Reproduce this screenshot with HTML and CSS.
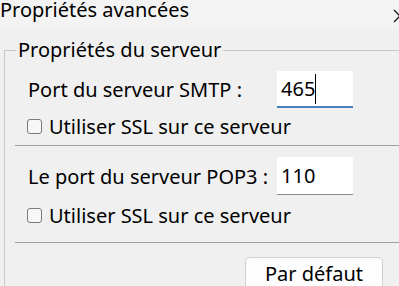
FILE: index.html
```html
<!DOCTYPE html>
<html lang="fr">
<head>
<meta charset="utf-8">
<title>Propriétés avancées</title>
<link rel="stylesheet" href="styles.css">
</head>
<body>
<div class="window">
  <div class="titlebar">
    <span class="title">Propriétés avancées</span>
    <svg class="close" width="12" height="14" viewBox="0 0 12 14"><path d="M1 1 L7 7 L1 13" fill="none" stroke="#1a1a1a" stroke-width="1.3"/></svg>
  </div>
  <div class="content">
    <div class="group">
      <div class="group-title">Propriétés du serveur</div>
      <div class="row row-smtp">
        <span class="label">Port du serveur SMTP :</span>
        <div class="input focused"><span>465</span><span class="caret"></span></div>
      </div>
      <label class="check check-1"><span class="box"></span><span>Utiliser SSL sur ce serveur</span></label>
      <div class="sep sep-1"></div>
      <div class="row row-pop">
        <span class="label">Le port du serveur POP3 :</span>
        <div class="input"><span>110</span></div>
      </div>
      <label class="check check-2"><span class="box"></span><span>Utiliser SSL sur ce serveur</span></label>
      <div class="sep sep-2"></div>
      <div class="actions">
        <button class="btn">Par défaut</button>
      </div>
    </div>
  </div>
</div>
</body>
</html>
```
FILE: styles.css
```css
html, body {
  margin: 0;
  padding: 0;
  background: #f0f0f0;
  overflow: hidden;
}
body {
  font-family: "Noto Sans", "Open Sans", sans-serif;
  font-size: 20px;
  color: #000;
  width: 399px;
  height: 286px;
}
.window {
  height: 286px;
  overflow: hidden;
}
.titlebar {
  height: 30px;
  background: #f3f3f3;
  display: flex;
  align-items: flex-start;
  justify-content: space-between;
}
.title {
  font-size: 20px;
  line-height: 20px;
  padding-top: 0;
}
.close {
  margin-right: -6px;
  margin-top: 9px;
}
.content {
  padding-left: 4px;
}
.group {
  margin-top: 20px;
  border-top: 1px solid #c8c8c8;
  border-left: 1px solid #c8c8c8;
  height: 236px;
}
.group-title {
  width: fit-content;
  margin-top: -13px;
  margin-left: 11px;
  padding: 0 2px;
  line-height: 24px;
  background: #f0f0f0;
}
.row {
  display: flex;
  align-items: center;
  height: 37px;
  padding-left: 23px;
}
.row-smtp { margin-top: 9px; }
.row-pop { margin-top: 11px; height: 38px; }
.label {
  width: 249px;
  flex: none;
  white-space: nowrap;
}
.input {
  width: 76px;
  height: 100%;
  box-sizing: border-box;
  background: #fff;
  border-bottom: 1px solid #8a8a8a;
  display: flex;
  align-items: center;
  padding-left: 4px;
}
.input.focused {
  border-bottom: 2px solid #4a7fc0;
}
.caret {
  display: inline-block;
  width: 1px;
  height: 30px;
  background: #000;
}
.check {
  display: flex;
  align-items: center;
  height: 26px;
  padding-left: 22px;
  gap: 7px;
  white-space: nowrap;
}
.check-1 { margin-top: 5px; }
.check-2 { margin-top: 7px; }
.box {
  width: 15px;
  height: 15px;
  flex: none;
  box-sizing: border-box;
  border: 1px solid #7a7a7a;
  border-radius: 3px;
  background: #f7f7f7;
}
.sep {
  height: 1px;
  background: #a0a0a0;
  margin-left: 10px;
}
.sep-1 { margin-top: 6px; }
.sep-2 { margin-top: 14px; }
.actions {
  display: flex;
  justify-content: flex-end;
  padding-right: 16px;
  margin-top: 14px;
}
.btn {
  width: 138px;
  height: 32px;
  font-family: inherit;
  font-size: 20px;
  color: #000;
  background: #fdfdfd;
  border: 1px solid #d0d0d0;
  border-radius: 4px;
  padding: 0;
}
```
